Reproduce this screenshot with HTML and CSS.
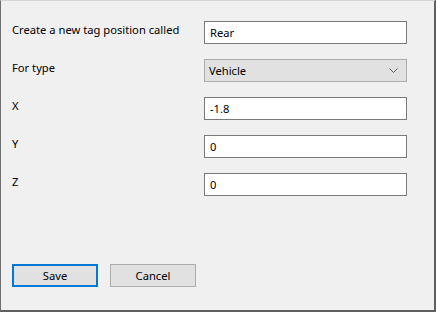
FILE: index.html
```html
<!DOCTYPE html>
<html lang="en">

<head>
    <meta charset="UTF-8">
    <title>New tag position</title>
    <link rel="stylesheet" href="styles.css">
</head>

<body>
    <div class="window">
        <form class="form">
            <label class="form-label" for="tagName">Create a new tag position called</label>
            <input type="text" id="tagName" class="form-input" value="Rear">

            <label class="form-label" for="tagType">For type</label>
            <div class="form-select" id="tagType">
                <span>Vehicle</span>
                <svg class="chevron" width="9" height="5" viewBox="0 0 9 5">
                    <path d="M0.5 0.5 L4.5 4.5 L8.5 0.5" fill="none" stroke="#606060" stroke-width="1"/>
                </svg>
            </div>

            <label class="form-label" for="posX">X</label>
            <input type="text" id="posX" class="form-input" value="-1.8">

            <label class="form-label" for="posY">Y</label>
            <input type="text" id="posY" class="form-input" value="0">

            <label class="form-label" for="posZ">Z</label>
            <input type="text" id="posZ" class="form-input" value="0">
        </form>

        <div class="buttons">
            <button type="button" class="btn btn-default">Save</button>
            <button type="button" class="btn">Cancel</button>
        </div>
    </div>
</body>

</html>
```

FILE: styles.css
```css
* {
    margin: 0;
    padding: 0;
    box-sizing: border-box;
}

body {
    font-family: 'Noto Sans', 'Liberation Sans', sans-serif;
    font-size: 11.2px;
    color: #000;
    background: #f0f0f0;
}

.window {
    width: 436px;
    height: 312px;
    background: #f0f0f0;
    border-top: 1px solid #d4d4d4;
    border-left: 1px solid #707070;
    border-right: 2px solid #5f5f5f;
    border-bottom: 2px solid #5f5f5f;
    padding: 20px 0 0 11px;
    display: flex;
    flex-direction: column;
}

.form {
    display: grid;
    grid-template-columns: 192px 203px;
    grid-auto-rows: 23px;
    row-gap: 15px;
}

.form-label {
    line-height: 16px;
    padding-top: 1px;
}

.form-input {
    height: 23px;
    border: 1px solid #7a7a7a;
    background: #fff;
    padding: 0 5px;
    font: inherit;
    color: #000;
    outline: none;
}

.form-select {
    height: 23px;
    border: 1px solid #adadad;
    background: #e1e1e1;
    padding: 0 5px 0 4px;
    display: flex;
    align-items: center;
    justify-content: space-between;
}

.chevron {
    margin-right: 3px;
}

.buttons {
    margin-top: 68px;
    display: flex;
    gap: 12px;
}

.btn {
    width: 86px;
    height: 23px;
    border: 1px solid #adadad;
    background: #e1e1e1;
    font: inherit;
    color: #000;
}

.btn-default {
    border: 2px solid #0078d7;
}
```
